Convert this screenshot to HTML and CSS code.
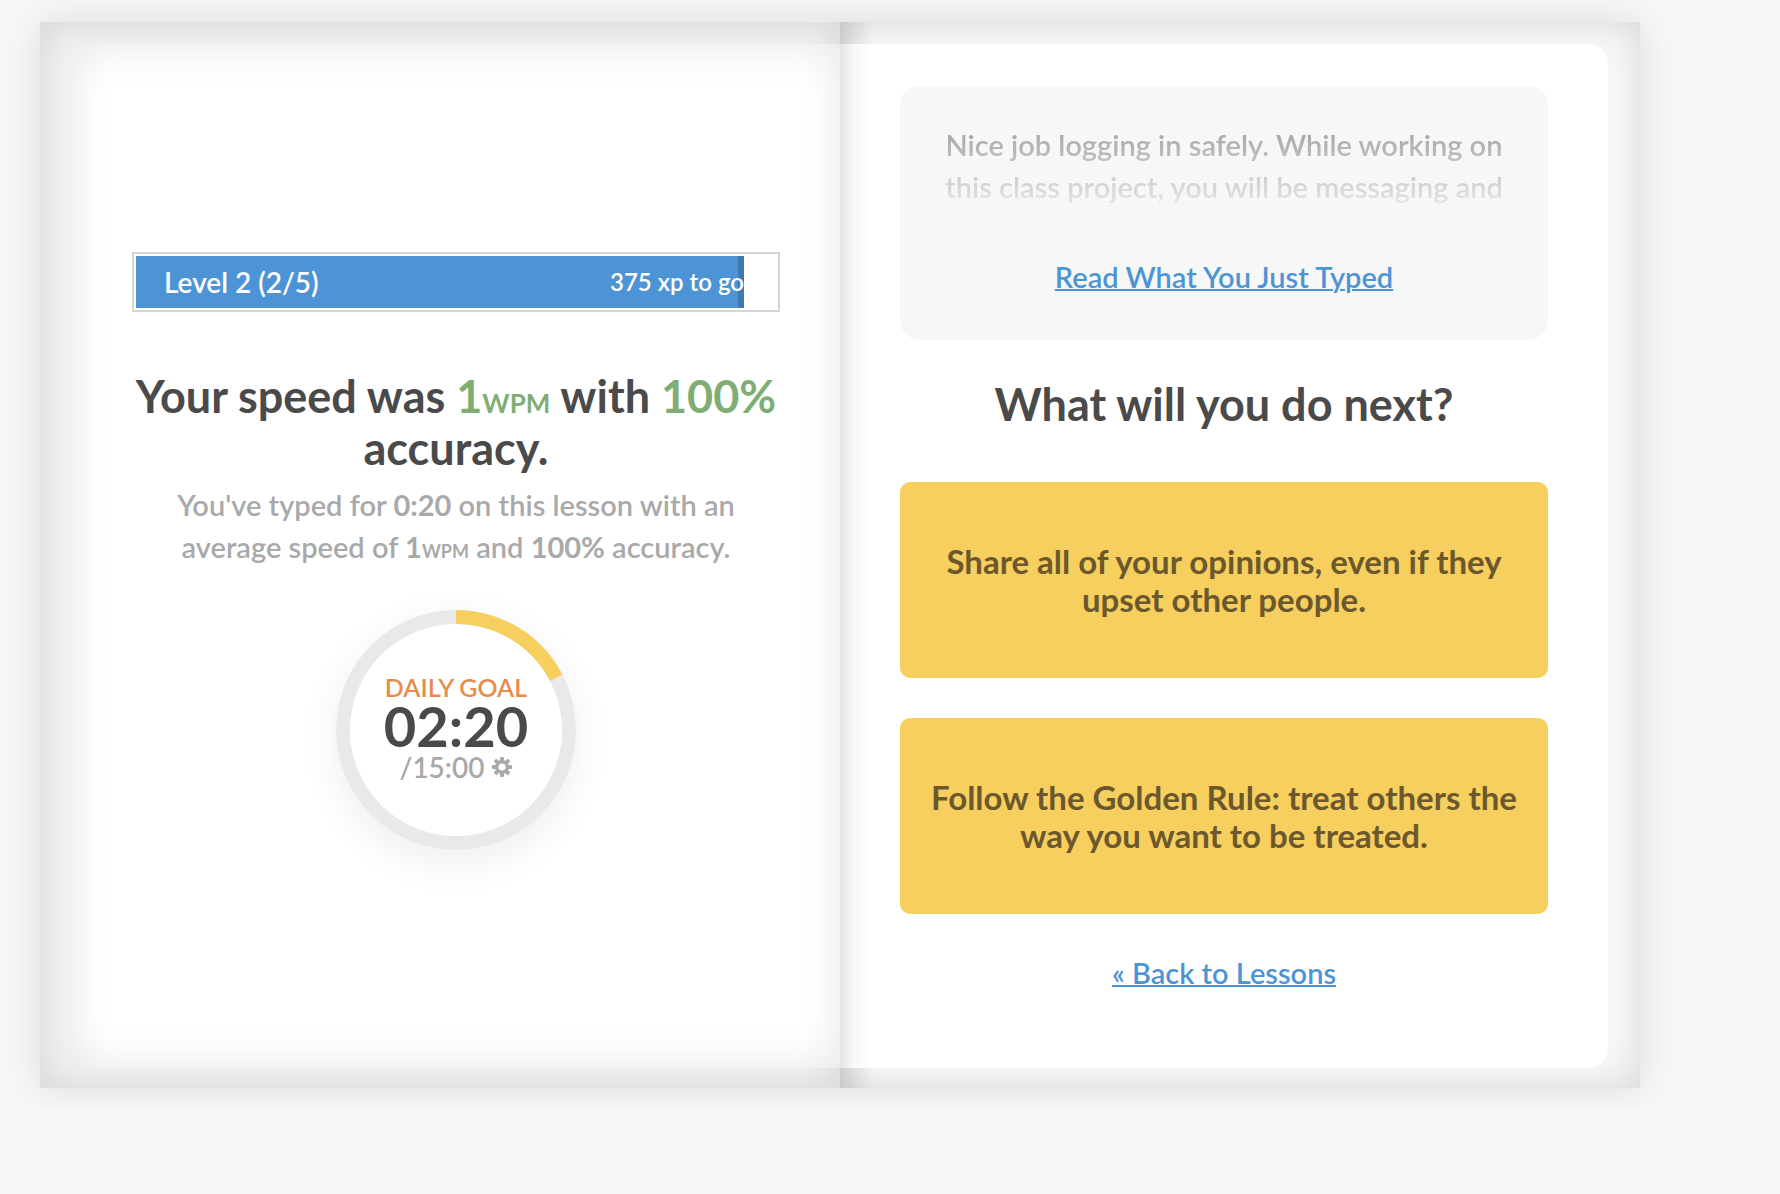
FILE: index.html
```html
<!DOCTYPE html>
<html lang="en">
<head>
  <meta charset="UTF-8">
  <meta name="viewport" content="width=device-width, initial-scale=1.0">
  <title>Lesson Complete</title>
  <link rel="stylesheet" href="styles.css">
</head>
<body>

<main class="book">
  <section class="side side-left">
    <div class="page page-left">
      <div class="level-bar">
        <div class="level-fill" style="width: 95%">
          <span class="level-name">Level 2 (2/5)</span>
          <span class="level-xp">375 xp to go</span>
        </div>
      </div>

      <h1>Your speed was <span class="good">1<small>WPM</small></span> with <span class="good">100%</span> accuracy.</h1>
      <p class="summary">You've typed for <strong>0:20</strong> on this lesson with an average speed of <strong>1<small>WPM</small></strong> and <strong>100%</strong> accuracy.</p>

      <div class="goal">
        <svg class="goal-ring" viewBox="0 0 240 240" aria-hidden="true">
          <circle cx="120" cy="120" r="113" fill="#fff" stroke="#e9e9e9" stroke-width="14"/>
          <circle cx="120" cy="120" r="113" fill="none" stroke="#f7cf5f" stroke-width="14" pathLength="360" stroke-dasharray="62.4 360" transform="rotate(-90 120 120)"/>
        </svg>
        <div class="goal-text">
          <span class="goal-label">DAILY GOAL</span>
          <span class="goal-time">02:20</span>
          <div class="goal-total">
            <span>/15:00</span>
            <button class="gear" type="button" aria-label="Change daily goal">
              <svg viewBox="0 0 20 20">
                <g fill="#a9a9a9">
                  <rect x="8" y="0" width="4" height="20" rx="1"/>
                  <rect x="8" y="0" width="4" height="20" rx="1" transform="rotate(45 10 10)"/>
                  <rect x="8" y="0" width="4" height="20" rx="1" transform="rotate(90 10 10)"/>
                  <rect x="8" y="0" width="4" height="20" rx="1" transform="rotate(135 10 10)"/>
                  <circle cx="10" cy="10" r="7"/>
                </g>
                <circle cx="10" cy="10" r="3.6" fill="#fff"/>
              </svg>
            </button>
          </div>
        </div>
      </div>
    </div>
  </section>

  <section class="side side-right">
    <div class="page page-right">
      <div class="story">
        <p class="excerpt">Nice job logging in safely. While working on this class project, you will be messaging and interacting online with your classmates.</p>
        <a href="#">Read What You Just Typed</a>
      </div>

      <h2>What will you do next?</h2>

      <div class="choices">
        <button class="choice" type="button">Share all of your opinions, even if they upset other people.</button>
        <button class="choice" type="button">Follow the Golden Rule: treat others the way you want to be treated.</button>
      </div>

      <a class="back" href="#">« Back to Lessons</a>
    </div>
  </section>
</main>

</body>
</html>
```
FILE: styles.css
```css
* {
  margin: 0;
  padding: 0;
  box-sizing: border-box;
}

body {
  padding: 22px 40px;
  background: #f7f7f7;
  color: #4a4a4a;
  font-family: Lato, sans-serif;
  font-size: 29px;
  font-weight: 600;
  line-height: 42px;
}

a {
  color: #4d94d6;
  text-decoration-thickness: 2px;
}

button {
  border: none;
  font-family: inherit;
  cursor: pointer;
}

small {
  line-height: 1;
}

strong {
  font-weight: 700;
}

.book {
  display: flex;
  max-width: 1600px;
  box-shadow: 0 0 36px rgba(0, 0, 0, 0.11);
}

.side {
  flex: 1;
  display: flex;
  padding: 22px 0 20px;
}

.side-left {
  padding-left: 32px;
  background: #f2f2f2;
  box-shadow: inset 0 0 40px rgba(0, 0, 0, 0.13);
}

.side-right {
  padding-right: 32px;
  background: linear-gradient(to right, rgba(0, 0, 0, 0.1), transparent 32px), #f9f9f9;
  box-shadow: inset 0 0 40px rgba(0, 0, 0, 0.14);
}

.page {
  flex: 1;
  display: flex;
  flex-direction: column;
  align-items: center;
  text-align: center;
}

.page-left {
  justify-content: center;
  padding: 42px 60px 52px;
  border-radius: 20px 0 0 20px;
  background: #fff;
  box-shadow: inset 0 0 44px rgba(0, 0, 0, 0.1);
}

.page-right {
  padding: 42px 60px 74px;
  border-radius: 0 20px 20px 0;
  background: linear-gradient(to right, #e5e5e5, #f8f8f8 14px, #fff 32px);
}

/* level progress */
.level-bar {
  width: 100%;
  height: 60px;
  padding: 2px;
  border: 2px solid #d5d5d5;
  background: #fff;
}

.level-fill {
  display: flex;
  justify-content: space-between;
  align-items: center;
  height: 100%;
  padding-left: 28px;
  border-right: 6px solid #3f77b0;
  background: #4d94d6;
  color: #fff;
  font-size: 28px;
  white-space: nowrap;
}

.level-xp {
  margin-right: -6px;
  font-size: 24px;
}

h1, h2 {
  font-size: 45px;
  font-weight: 700;
  line-height: 52px;
}

h1 {
  margin-top: 58px;
}

.good {
  color: #7fae74;
}

h1 small {
  font-size: 26px;
}

.summary {
  max-width: 600px;
  margin: 10px 0 42px;
  color: #a9a9a9;
}

.summary small {
  font-size: 18px;
}

/* daily goal */
.goal {
  display: grid;
  place-items: center;
  width: 240px;
  height: 240px;
  border-radius: 50%;
  box-shadow: 0 12px 40px rgba(0, 0, 0, 0.07);
}

.goal-ring,
.goal-text {
  grid-area: 1 / 1;
}

.goal-ring {
  width: 240px;
  height: 240px;
}

.goal-text {
  display: flex;
  flex-direction: column;
  align-items: center;
  padding-bottom: 4px;
}

.goal-label {
  color: #e88b4d;
  font-size: 25px;
  line-height: 28px;
}

.goal-time {
  font-size: 56px;
  font-weight: 700;
  line-height: 50px;
}

.goal-total {
  display: flex;
  align-items: center;
  gap: 8px;
  color: #a9a9a9;
  font-size: 28px;
  line-height: 32px;
}

.gear {
  width: 20px;
  height: 20px;
  background: none;
}

.gear svg {
  display: block;
}

/* story card */
.story {
  width: 100%;
  padding: 38px 40px 42px;
  border-radius: 20px;
  background: #f7f7f7;
}

.excerpt {
  height: 100px;
  margin-bottom: 32px;
  overflow: hidden;
  color: #a0a0a0;
  -webkit-mask-image: linear-gradient(#000, transparent);
  mask-image: linear-gradient(#000, transparent);
}

h2 {
  margin: 38px 0 52px;
}

.choices {
  display: flex;
  flex-direction: column;
  gap: 40px;
  width: 100%;
}

.choice {
  min-height: 196px;
  padding: 20px 24px;
  border-radius: 10px;
  background: #f7cf5f;
  color: #6b582d;
  font-size: 33px;
  font-weight: 700;
  line-height: 38px;
}

.back {
  margin-top: 38px;
}

@media (max-width: 900px) {
  .book {
    flex-direction: column;
  }
}
```
